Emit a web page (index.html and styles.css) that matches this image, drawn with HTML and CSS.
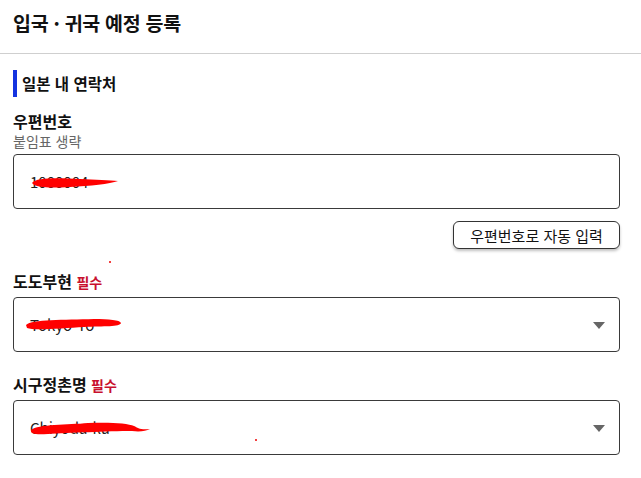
FILE: index.html
```html
<!DOCTYPE html>
<html lang="ko">
<head>
<meta charset="utf-8">
<title>입국 · 귀국 예정 등록</title>
<link rel="stylesheet" href="styles.css">
</head>
<body>
<header class="page-header">
  <h1 class="page-title">입국 · 귀국 예정 등록</h1>
</header>
<main class="content">
  <h2 class="section-title">일본 내 연락처</h2>

  <div class="field">
    <div class="label">우편번호</div>
    <div class="hint">붙임표 생략</div>
    <div class="box">
      <span class="value">1000004</span>
      <svg class="redact r1" viewBox="0 0 90 14" width="90" height="14"><path d="M2 8 C6 2, 30 3, 50 4 C65 5, 80 5, 88 6 C80 9, 60 11, 40 12 C20 13, 6 13, 2 8 Z" fill="#f00"/></svg>
    </div>
    <div class="actions">
      <button class="btn" type="button">우편번호로 자동 입력</button>
    </div>
    <span class="dot d1"></span>
  </div>

  <div class="field">
    <div class="label">도도부현 <span class="req">필수</span></div>
    <div class="box select">
      <span class="value">Tokyo-To</span>
      <svg class="redact r2" viewBox="0 0 100 16" width="100" height="16"><path d="M2 9 C8 3, 40 4, 70 3 C85 3, 96 4, 97 7 C96 11, 80 10, 60 11 C40 12, 10 15, 3 12 Z" fill="#f00"/></svg>
      <span class="arrow"></span>
    </div>
  </div>

  <div class="field">
    <div class="label">시구정촌명 <span class="req">필수</span></div>
    <div class="box select">
      <span class="value">Chiyoda-ku</span>
      <svg class="redact r3" viewBox="0 0 126 18" width="126" height="18"><path d="M3 10 C10 4, 40 5, 60 3 C80 2, 100 3, 106 6 C110 8, 112 10, 122 9 C118 11, 112 12, 104 11 C80 11, 40 13, 20 14 C8 15, 2 14, 3 10 Z" fill="#f00"/></svg>
      <span class="arrow"></span>
      <span class="dot d2"></span>
    </div>
  </div>
</main>
</body>
</html>
```

FILE: styles.css
```css
* { box-sizing: border-box; }
html, body { margin: 0; padding: 0; background: #fff; }
body {
  font-family: "Noto Sans CJK KR", "Noto Sans", sans-serif;
  color: #111;
  width: 641px;
}
.page-header {
  height: 54px;
  border-bottom: 1px solid #cfcfcf;
  padding: 10px 13px 0;
}
.page-title {
  margin: 0;
  font-size: 19.5px;
  line-height: 26px;
  font-weight: 700;
  letter-spacing: -0.3px;
}
.content {
  padding: 16px 21px 0 13px;
}
.section-title {
  margin: 0;
  border-left: 4px solid #1433e0;
  padding-left: 5px;
  font-size: 15.5px;
  line-height: 27px;
  height: 27px;
  font-weight: 700;
}
.field { position: relative; }
.label {
  font-size: 16px;
  font-weight: 700;
  line-height: 20px;
  margin-top: 14px;
}
.req { color: #c8102e; font-size: 14px; }
.hint {
  color: #666;
  font-size: 14px;
  line-height: 18px;
  margin-top: 1px;
}
.box {
  position: relative;
  margin-top: 5px;
  height: 55px;
  border: 1px solid #3a3a3a;
  border-radius: 4px;
  display: flex;
  align-items: center;
  padding: 0 16px;
  font-size: 15px;
  color: #222;
}
.hint + .box { margin-top: 4px; }
.value { color: #222; }
.redact { position: absolute; }
.r1 { left: 16px; top: 20px; }
.r2 { left: 10px; top: 18px; }
.r3 { left: 14px; top: 19px; }
.select .arrow {
  position: absolute;
  right: 14px;
  top: 24px;
  width: 0; height: 0;
  border-left: 6px solid transparent;
  border-right: 6px solid transparent;
  border-top: 7px solid #666;
}
.actions {
  display: flex;
  justify-content: flex-end;
  margin-top: 12px;
}
.btn {
  font-family: inherit;
  font-size: 15px;
  color: #111;
  background: #fff;
  border: 1px solid #333;
  border-radius: 6px;
  height: 28px;
  width: 167px;
  padding: 0;
  box-shadow: 0 2px 3px rgba(0,0,0,0.25);
}
.dot {
  position: absolute;
  width: 2px; height: 2px;
  background: #e00;
  border-radius: 50%;
}
.d1 { left: 96px; bottom: -14px; }
.d2 { left: 241px; top: 38px; }
.field + .field .label { margin-top: 22px; }
```
